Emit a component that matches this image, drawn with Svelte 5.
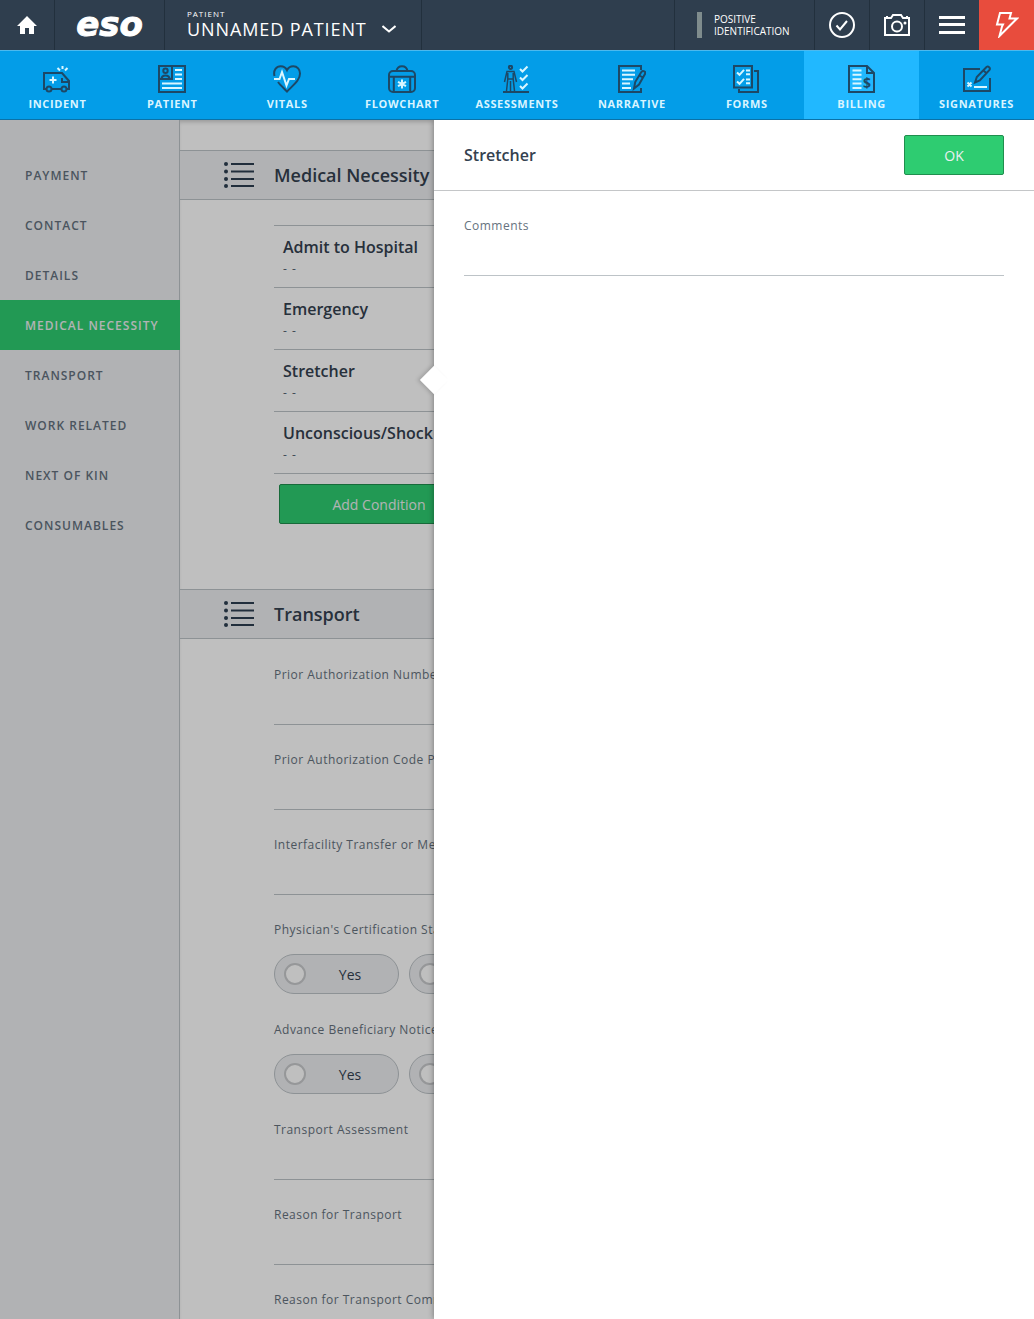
<script>
  const tabs = ['Incident', 'Patient', 'Vitals', 'Flowchart', 'Assessments', 'Narrative', 'Forms', 'Billing', 'Signatures'];
  const sections = ['Payment', 'Contact', 'Details', 'Medical Necessity', 'Transport', 'Work Related', 'Next of Kin', 'Consumables'];
  const conditions = ['Admit to Hospital', 'Emergency', 'Stretcher', 'Unconscious/Shock'];

  const fields = [
    { id: 'auth-number', label: 'Prior Authorization Number' },
    { id: 'auth-payer', label: 'Prior Authorization Code Payer' },
    { id: 'interfacility', label: 'Interfacility Transfer or Medical Necessity' },
    { id: 'pcs', label: "Physician's Certification Statement", toggle: true },
    { id: 'abn', label: 'Advance Beneficiary Notice', toggle: true },
    { id: 'assessment', label: 'Transport Assessment' },
    { id: 'reason', label: 'Reason for Transport' },
    { id: 'reason-comments', label: 'Reason for Transport Comments' }
  ];

  let activeTab = $state('Billing');
  let activeSection = $state('Medical Necessity');
  let selected = $state('Stretcher');
  let comments = $state('');
</script>

{#snippet tabIcon(name)}
  <svg class="tab-icon" width="28" height="28" viewBox="0 0 28 28" aria-hidden="true">
    {#if name === 'Incident'}
      <path class="dark" d="M3 24H1V8h18l7 8v8h-2M9 24h9M19 13v4h7" />
      <circle class="dark" cx="6" cy="24" r="2.5" />
      <circle class="dark" cx="21" cy="24" r="2.5" />
      <path class="light" d="M10 11.5v7M6.5 15h7M14.5 3l2.5 2.5M19.5 1v3M24.5 3l-2.5 2.5" />
    {:else if name === 'Patient'}
      <path class="dark" d="M1 1h26v26H1zM1 14h13V1" />
      <circle class="dark" cx="7.5" cy="5.8" r="2.2" />
      <path class="dark" d="M3.5 14c0-3 1.5-3.5 4-3.5s4 .5 4 3.5" />
      <path class="light" d="M17 5h7M17 9.5h7M17 14h7M4 18.5h20M4 23h20" />
    {:else if name === 'Vitals'}
      <path class="dark" d="M1.5 11C0 5 3.5 1.2 7.7 1.2c3 0 5.2 1.6 6.3 4 1.1-2.4 3.3-4 6.3-4 4 0 6.7 3.2 6.7 7.3 0 6-4.5 9.5-13 18-4-4-7-6.7-9-9.5" />
      <path class="light" d="M1 14h5.5L9 7l4.500 13.500L16 14h6" />
    {:else if name === 'Flowchart'}
      <path class="dark" d="M8.500 6c.5-3 2.500-4.800 5.500-4.800S19 3 19.500 6" />
      <rect class="dark" x="1" y="6" width="26" height="21" rx="4" />
      <path class="dark" d="M1 11.800h26M5.800 12v15M22.200 12v15" />
      <path class="light" d="M14 14.500v9M10 16.800l8 4.400M18 16.800l-8 4.400" />
    {:else if name === 'Assessments'}
      <circle class="dark" cx="7.5" cy="2.3" r="1.6" />
      <path class="dark thin" d="M1.500 17L4 6.500h7L13.500 17M4.800 8v6L3.500 26M10.200 8v6l1.300 12M7.500 16v10M5 14h5" />
      <path class="dark" d="M0 27h26" />
      <path class="light" d="M17 4l2.500 2.500 5-5M17 12.500l2.500 2.500 5-5M17 21l2.500 2.500 5-5" />
    {:else if name === 'Narrative'}
      <path class="dark" d="M23 5V1H1v26h22v-4" />
      <path class="dark" d="M16 23.500l1.200-6.500L23.500 6.800c1.500-1.800 4.500-.2 3.600 2L21 19.500zM21.500 10.500l3.300 2" />
      <path class="light" d="M4 5.500h13M4 9.800h13M4 14.200h11M4 18.500h8M4 23h9" />
    {:else if name === 'Forms'}
      <path class="dark" d="M1 1h18v21.500H1zM21 6h4v21H6v-3" />
      <path class="light" d="M4 7.500l2.500 2.300 4.500-5M4 16.500l2.500 2.300 4.500-5M13 5.500h4M13 9.300h4M13 14.500h4M13 18.300h4" />
    {:else if name === 'Billing'}
      <path class="dark" d="M1 1h18l7 7v19H1zM19 1v7h7" />
      <path class="light" d="M4.500 5.500h9M4.500 9.800h9M4.500 14.200h9M4.500 18.500h9M4.500 23h9" />
      <text class="dollar" x="15" y="23">$</text>
    {:else}
      <path class="dark" d="M17 4H1v22h26V13" />
      <path class="dark" d="M12 17.500l1.800-5.500L23.500 2c1.700-1.300 4.300 1 3 3l-9.700 10.500zM20.500 5.500l3 2.800" />
      <path class="light" d="M4.500 17.500l4 4M8.500 17.500l-4 4M11 22h13" />
    {/if}
  </svg>
{/snippet}

<div class="app">
  <header class="topbar">
    <button class="cell home" aria-label="Home">
      <svg width="20" height="18" viewBox="0 0 20 18" aria-hidden="true">
        <path fill="#fff" d="M10 0l10 10h-3v8h-5v-6H8v6H3v-8H0z" />
      </svg>
    </button>
    <a class="cell logo" href="#home">eso</a>
    <button class="cell patient">
      <span class="patient-text">
        <span class="patient-label">PATIENT</span>
        <span class="patient-name">UNNAMED PATIENT</span>
      </span>
      <svg class="chevron" width="14" height="8" viewBox="0 0 14 8" aria-hidden="true">
        <path class="stroke" d="M.5 1L7 6.500 13.500 1" />
      </svg>
    </button>

    <div class="tools">
      <button class="cell identification">
        <span class="id-bar"></span>
        <span>POSITIVE<br />IDENTIFICATION</span>
      </button>
      <button class="cell tool" aria-label="Validate">
        <svg width="26" height="26" viewBox="0 0 26 26" aria-hidden="true">
          <circle class="stroke" cx="13" cy="13" r="12" />
          <path class="stroke" d="M7.500 13.500l3.500 4 7-8.500" />
        </svg>
      </button>
      <button class="cell tool" aria-label="Camera">
        <svg width="26" height="22" viewBox="0 0 26 22" aria-hidden="true">
          <path class="stroke" d="M1 4h6l2-3h8l2 3h6v17H1zM3 4V2M23 4V2" />
          <circle class="stroke" cx="13" cy="12.5" r="5" />
          <circle fill="#fff" cx="21" cy="9" r="1.5" />
        </svg>
      </button>
      <button class="cell tool" aria-label="Menu">
        <svg width="26" height="20" viewBox="0 0 26 20" aria-hidden="true">
          <path fill="#fff" d="M0 1h26v3H0zM0 8h26v3H0zM0 16h26v3H0z" />
        </svg>
      </button>
      <button class="cell tool alert" aria-label="Alerts">
        <svg width="24" height="26" viewBox="0 0 24 26" aria-hidden="true">
          <path class="stroke" d="M5 1h11l-1.500 5.500H22L4.500 24l2.500-9.500 1-2H2z" />
        </svg>
      </button>
    </div>
  </header>

  <nav class="tabs">
    {#each tabs as tab}
      <button class="tab" class:active={activeTab === tab} onclick={() => (activeTab = tab)}>
        {@render tabIcon(tab)}
        <span>{tab}</span>
      </button>
    {/each}
  </nav>

  <div class="workspace">
    <nav class="sidebar">
      {#each sections as section}
        <button class="side-item" class:active={activeSection === section} onclick={() => (activeSection = section)}>
          {section}
        </button>
      {/each}
    </nav>

    <main class="content">
      <section>
        {@render sectionTitle('Medical Necessity')}
        <div class="section-body conditions-body">
          <ul class="conditions">
            {#each conditions as condition}
              <li>
                <button class="condition" onclick={() => (selected = condition)}>
                  <span class="condition-name">{condition}</span>
                  <span class="condition-value">- -</span>
                </button>
              </li>
            {/each}
          </ul>
          <button class="btn add">Add Condition</button>
        </div>
      </section>

      <section>
        {@render sectionTitle('Transport')}
        <div class="section-body">
          {#each fields as field}
            {#if field.toggle}
              <fieldset class="field">
                <legend class="field-label">{field.label}</legend>
                <div class="pills">
                  {#each ['Yes', 'No'] as option}
                    <label class="pill">
                      <input type="radio" name={field.id} value={option} />
                      <span>{option}</span>
                    </label>
                  {/each}
                </div>
              </fieldset>
            {:else}
              <div class="field">
                <label class="field-label" for={field.id}>{field.label}</label>
                <input class="field-input" id={field.id} type="text" />
              </div>
            {/if}
          {/each}
        </div>
      </section>
    </main>

    <div class="overlay"></div>

    <aside class="drawer">
      <div class="drawer-header">
        <h2>{selected}</h2>
        <button class="btn ok">OK</button>
      </div>
      <div class="drawer-body">
        <div class="field">
          <label class="field-label" for="comments">Comments</label>
          <input class="field-input" id="comments" type="text" bind:value={comments} />
        </div>
      </div>
    </aside>
  </div>
</div>

{#snippet sectionTitle(title)}
  <div class="section-header">
    <svg width="30" height="26" viewBox="0 0 30 26" aria-hidden="true">
      <path fill="none" stroke="#2c3e50" stroke-width="2" d="M7 2h23M7 9.500h23M7 17h23M7 24h23" />
      <g fill="#2c3e50">
        <circle cx="2" cy="2" r="2" />
        <circle cx="2" cy="9.5" r="2" />
        <circle cx="2" cy="17" r="2" />
        <circle cx="2" cy="24" r="2" />
      </g>
    </svg>
    <h2>{title}</h2>
  </div>
{/snippet}

<style>
  :global(body) {
    margin: 0;
  }

  .app {
    display: flex;
    flex-direction: column;
    height: 100vh;
    overflow: hidden;
    font-family: 'Open Sans', 'Noto Sans', sans-serif;
    color: #34414f;
  }

  .app :global(*) {
    box-sizing: border-box;
  }

  button {
    margin: 0;
    padding: 0;
    border: 0;
    background: none;
    color: inherit;
    font: inherit;
    cursor: pointer;
  }

  h2 {
    margin: 0;
    font-weight: 600;
  }

  /* Top bar */
  .topbar {
    display: flex;
    flex: none;
    height: 50px;
    background: #2f3e4e;
    color: #fff;
  }

  .cell {
    display: flex;
    align-items: center;
    justify-content: center;
    border-right: 1px solid #22303d;
  }

  .home {
    width: 55px;
  }

  .logo {
    width: 110px;
    padding-bottom: 2px;
    color: #fff;
    font-family: 'DejaVu Sans', sans-serif;
    font-size: 34px;
    font-style: italic;
    font-weight: 700;
    line-height: 44px;
    text-decoration: none;
    -webkit-text-stroke: 1px #fff;
  }

  .patient {
    align-items: flex-end;
    gap: 15px;
    padding: 0 25px 11px 22px;
  }

  .patient-text {
    display: flex;
    flex-direction: column;
    align-items: flex-start;
  }

  .patient-label {
    font-size: 8px;
    line-height: 10px;
    letter-spacing: 1px;
  }

  .patient-name {
    font-size: 18px;
    line-height: 20px;
    letter-spacing: 0.05em;
  }

  .chevron {
    margin-bottom: 6px;
  }

  .stroke {
    fill: none;
    stroke: #fff;
    stroke-width: 2;
  }

  .tools {
    display: flex;
    margin-left: auto;
  }

  .tools .cell {
    border-right: 0;
    border-left: 1px solid #22303d;
  }

  .identification {
    gap: 12px;
    width: 140px;
    padding-left: 22px;
    justify-content: flex-start;
    font-size: 10px;
    line-height: 12px;
    text-align: left;
  }

  .id-bar {
    width: 5px;
    height: 26px;
    background: #7f8c8d;
  }

  .tool {
    width: 55px;
  }

  .tools .alert {
    border-left-color: #e84c3d;
    background: #e84c3d;
  }

  /* Tabs */
  .tabs {
    position: relative;
    z-index: 2;
    display: flex;
    flex: none;
    height: 70px;
    border-top: 1px solid #4cb9ee;
    border-bottom: 1px solid #0a72a8;
    background: #039de8;
  }

  .tab {
    display: flex;
    flex: 1 1 0;
    flex-direction: column;
    align-items: center;
    min-width: 0;
    padding-top: 14px;
    color: #d9f4ff;
    font-size: 11px;
    font-weight: 700;
    line-height: 22px;
    letter-spacing: 0.06em;
    text-transform: uppercase;
  }

  .tab.active {
    background: #21b8ff;
  }

  .tab-icon {
    flex: none;
  }

  .dark,
  .light {
    fill: none;
    stroke: #1d4866;
    stroke-width: 2;
  }

  .thin {
    stroke-width: 1.5;
  }

  .light {
    stroke: #d9f6ff;
  }

  .dollar {
    fill: #1d4866;
    font-size: 14px;
    font-weight: 700;
    letter-spacing: 0;
  }

  /* Workspace */
  .workspace {
    position: relative;
    display: flex;
    flex: 1;
    min-height: 0;
  }

  .sidebar {
    flex: none;
    width: 180px;
    padding-top: 30px;
    background: #eceef1 linear-gradient(#bdc3c7, #bdc3c7) right / 1px 100% no-repeat;
  }

  .side-item {
    display: block;
    width: 100%;
    padding: 2px 0 0 25px;
    color: #64717e;
    font-size: 12px;
    font-weight: 600;
    line-height: 48px;
    letter-spacing: 1px;
    text-align: left;
    text-transform: uppercase;
  }

  .side-item.active {
    background: #2ecc71;
    color: #ecf0f1;
  }

  .content {
    flex: 1;
    min-width: 0;
    padding-top: 30px;
    overflow: hidden auto;
    background: #fff;
    box-shadow: inset 0 4px 4px -2px rgba(0, 0, 0, 0.2);
  }

  .section-header {
    display: flex;
    align-items: center;
    gap: 20px;
    height: 50px;
    padding-left: 44px;
    border-top: 1px solid #bdc3c7;
    border-bottom: 1px solid #bdc3c7;
    background: #eceef1;
  }

  .section-header h2 {
    font-size: 18px;
    line-height: 24px;
  }

  .section-body {
    padding: 1px 94px 30px;
  }

  .conditions-body {
    padding-top: 25px;
    padding-bottom: 65px;
  }

  .conditions {
    margin: 0 0 10px;
    padding: 0;
    border-top: 1px solid #bdc3c7;
    list-style: none;
  }

  .condition {
    display: flex;
    flex-direction: column;
    width: 100%;
    padding: 10px 9px 7px;
    border-bottom: 1px solid #bdc3c7;
    text-align: left;
  }

  .condition-name {
    font-size: 16px;
    font-weight: 600;
    line-height: 22px;
  }

  .condition-value {
    color: #566573;
    font-size: 12px;
    line-height: 22px;
    letter-spacing: 1px;
  }

  .btn {
    height: 40px;
    border: 1px solid #208e4e;
    border-radius: 2px;
    background: #2ecc71;
    color: #ecf0f1;
    font-size: 14px;
  }

  .add {
    width: 200px;
    margin-left: 5px;
  }

  .field {
    margin: 0;
    padding: 25px 0 0;
    border: 0;
  }

  .field-label {
    display: block;
    padding: 0;
    color: #66727e;
    font-size: 12px;
    line-height: 20px;
    letter-spacing: 0.04em;
    white-space: nowrap;
  }

  fieldset .field-label {
    float: left;
    width: 100%;
    margin-bottom: 14px;
  }

  .field-input {
    display: block;
    width: 100%;
    height: 40px;
    padding: 0;
    border: 0;
    border-bottom: 1px solid #bdc3c7;
    background: none;
    color: inherit;
    font: inherit;
    font-size: 14px;
    outline: 0;
  }

  .pills {
    display: flex;
    gap: 10px;
    clear: both;
    padding-bottom: 1px;
  }

  .pill {
    display: flex;
    align-items: center;
    width: 125px;
    height: 40px;
    padding: 0 4px 0 9px;
    border: 1px solid #bdc3c7;
    border-radius: 20px;
    background: #eceef1;
    font-size: 14px;
  }

  .pill input {
    flex: none;
    width: 22px;
    height: 22px;
    margin: 0;
    border: 2px solid #c8cacc;
    border-radius: 50%;
    appearance: none;
    background: #fff;
  }

  .pill input:checked {
    background: #2ecc71;
  }

  .pill span {
    flex: 1;
    text-align: center;
  }

  .overlay {
    position: absolute;
    inset: 0;
    background: rgba(0, 0, 0, 0.25);
  }

  /* Drawer */
  .drawer {
    position: absolute;
    top: 0;
    right: 0;
    bottom: 0;
    width: 600px;
    max-width: 100%;
    background: #fff;
    box-shadow: 0 0 6px rgba(0, 0, 0, 0.4);
  }

  /* pointer towards the condition being edited */
  .drawer::before {
    position: absolute;
    top: 250px;
    left: -10px;
    width: 20px;
    height: 20px;
    background: #fff;
    box-shadow: -2px 2px 4px rgba(0, 0, 0, 0.15);
    content: '';
    transform: rotate(45deg);
  }

  .drawer-header {
    display: flex;
    align-items: center;
    justify-content: space-between;
    height: 71px;
    padding: 0 30px;
    border-bottom: 1px solid #c4c6c8;
  }

  .drawer-header h2 {
    font-size: 16px;
    line-height: 22px;
  }

  .ok {
    width: 100px;
  }

  .drawer-body {
    position: relative;
    padding: 0 30px;
  }
</style>
